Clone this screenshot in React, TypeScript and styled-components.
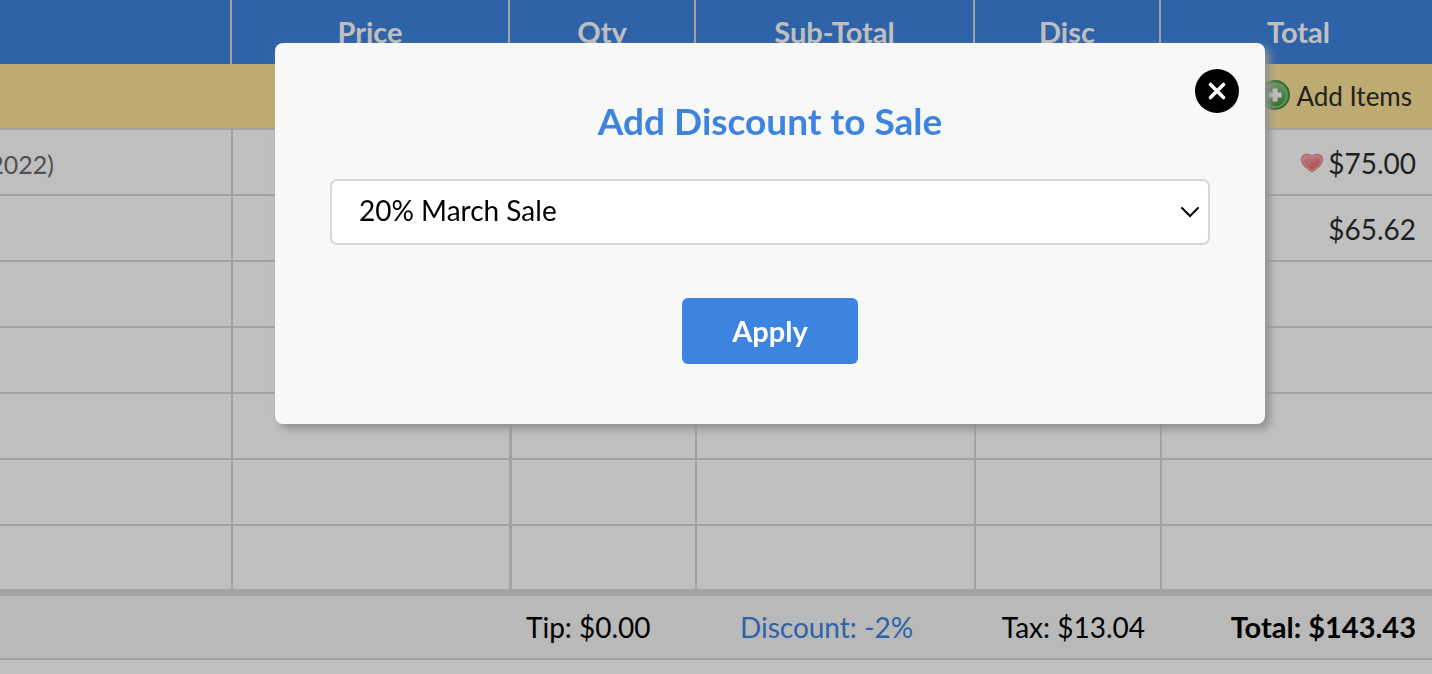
import React from "react";
import styled, { createGlobalStyle, css } from "styled-components";

const GlobalStyle = createGlobalStyle`
  *, *::before, *::after { box-sizing: border-box; }
  body { margin: 0; background: #fff; font-family: Lato, "Liberation Sans", sans-serif; overflow-x: hidden; }
  button, select { font-family: inherit; }
`;

const line = "#d9d9d9";

const SaleTable = styled.table`
  width: 100%;
  table-layout: fixed;
  border-collapse: separate;
  border-spacing: 0;
  color: #2d2d2d;
  font-size: 28px;
  line-height: 36px;
`;

const Column = styled.col<{ $width: number }>`
  width: ${(p) => p.$width}px;
`;

const HeadCell = styled.th`
  height: 64px;
  padding: 0;
  background: #3f84e1;
  color: #fff;
  font-size: 29px;
  font-weight: 700;
  border-right: 2px solid ${line};
  &:last-child { border-right: 0; padding-left: 4px; }
`;

const ActionCell = styled.td`
  height: 64px;
  padding: 0 20px 3px 0;
  background: #fee498;
  text-align: right;
`;

const AddItems = styled.button`
  display: inline-flex;
  align-items: center;
  gap: 4px;
  padding: 0;
  border: 0;
  background: none;
  color: inherit;
  font-size: 26px;
  line-height: 36px;
  white-space: nowrap;
  vertical-align: middle;
`;

const Cell = styled.td<{ $last?: boolean; $heavy?: boolean }>`
  height: ${(p) => (p.$last ? 65 : 66)}px;
  padding: 0;
  border-top: 2px solid ${line};
  border-left: ${(p) => (p.$heavy ? 2 : 1)}px solid ${line};
  border-right: 1px solid ${line};
  &:first-child { border-left: 0; }
  &:last-child { border-right: 0; padding: 0 16px 2px 0; text-align: right; }
`;

const Note = styled.div`
  display: flex;
  justify-content: flex-end;
  width: 54px;
  padding-top: 4px;
  overflow: hidden;
  color: #6c6c6c;
  font-size: 25px;
`;

const Amount = styled.span`
  display: inline-flex;
  align-items: center;
  gap: 5px;
  vertical-align: middle;
`;

const FootCell = styled.td<{ $align?: "left" | "center" | "right"; $strong?: boolean }>`
  height: 71px;
  padding: 0 16px;
  background: #f7f7f7;
  color: #000;
  border-top: 7px solid ${line};
  border-bottom: 2px solid ${line};
  text-align: ${(p) => p.$align ?? "left"};
  white-space: nowrap;
  ${(p) => p.$strong && css`font-size: 29px; font-weight: 700;`}
`;

const DiscountLink = styled.a`
  margin-right: 18px;
  color: #3f84e1;
  text-decoration: none;
`;

const Overlay = styled.div`
  position: fixed;
  inset: 0;
  padding: 43px 167px 0 275px;
  background: rgba(0, 0, 0, 0.25);
`;

const Dialog = styled.form`
  position: relative;
  display: flex;
  flex-direction: column;
  align-items: center;
  padding: 54px 55px 60px;
  border-radius: 8px;
  background: #f8f8f8;
  box-shadow: 5px 5px 8px #909090;
`;

const CloseButton = styled.button`
  position: absolute;
  top: 26px;
  right: 26px;
  width: 44px;
  height: 44px;
  padding: 0;
  border: 0;
  border-radius: 50%;
  background: #000;
  svg { display: block; }
`;

const Title = styled.h2`
  margin: 0 0 34px;
  color: #3d84e1;
  font-size: 37px;
  line-height: 48px;
  font-weight: 700;
`;

const SelectWrap = styled.div`
  position: relative;
  width: 100%;
  svg { position: absolute; right: 10px; top: 26px; pointer-events: none; }
`;

const Select = styled.select`
  display: block;
  appearance: none;
  width: 100%;
  height: 66px;
  padding: 0 44px 4px 27px;
  border: 2px solid #d6d6d6;
  border-radius: 7px;
  background: #fff;
  color: #000;
  font-size: 28px;
`;

const ApplyButton = styled.button`
  width: 176px;
  height: 66px;
  margin-top: 53px;
  padding: 0 0 2px;
  border: 0;
  border-radius: 6px;
  background: #3d84e1;
  color: #fff;
  font-size: 29px;
  font-weight: 700;
`;

const PlusIcon = () => (
  <svg width="32" height="32" viewBox="0 0 32 32" aria-hidden="true">
    <defs>
      <linearGradient id="plusFill" x1="0" y1="0" x2="0" y2="1">
        <stop offset="0" stopColor="#8cc486" />
        <stop offset="1" stopColor="#439539" />
      </linearGradient>
    </defs>
    <circle cx="15" cy="15" r="15" fill="#47923f" />
    <circle cx="15" cy="15" r="12" fill="url(#plusFill)" stroke="#8fc88a" strokeWidth="1.500" />
    <path d="M12.500 8.500h5v4h4v5h-4v4h-5v-4h-4v-5h4z" fill="#fff" />
  </svg>
);

const HeartIcon = () => (
  <svg width="22" height="20" viewBox="0 0 22 20" aria-hidden="true">
    <defs>
      <linearGradient id="heartFill" x1="0" y1="0" x2="0.4" y2="1">
        <stop offset="0" stopColor="#ffb0b0" />
        <stop offset="1" stopColor="#e86a6e" />
      </linearGradient>
    </defs>
    <path d="M11 19.5C7 16 0 13 0 6.500 0 3 2.600 0.800 5.800 0.800c2.200 0 4.200 0.800 5.200 2.200 1-1.400 3-2.200 5.200-2.200 3.200 0 5.800 2.200 5.800 5.700 0 6.500-7 9.500-11 13z" fill="#ec7f80" />
    <path d="M11 17.300C7.500 14.500 1.700 11.800 1.700 6.800 1.700 4 3.600 2.500 6 2.500c2.200 0 4 1 5 2.800 1-1.800 2.800-2.800 5-2.800 2.400 0 4.300 1.500 4.300 4.300 0 5-5.800 7.700-9.300 10.500z" fill="url(#heartFill)" stroke="#ffc4c4" strokeWidth="0.8" />
  </svg>
);

const columns = [232, 278, 186, 279, 186, 271];
const headings = ["", "Price", "Qty", "Sub-Total", "Disc", "Total"];
const rows: { note?: string; total?: string; liked?: boolean }[] = [
  { note: "2022)", total: "$75.00", liked: true },
  { total: "$65.62" },
  {},
  {},
  {},
  {},
  {},
];

export default function App() {
  return (
    <>
      <GlobalStyle />
      <SaleTable>
        <colgroup>
          {columns.map((w, i) => <Column key={i} $width={w} />)}
        </colgroup>
        <thead>
          <tr>{headings.map((h, i) => <HeadCell key={i} scope="col">{h}</HeadCell>)}</tr>
        </thead>
        <tbody>
          <tr>
            <ActionCell colSpan={6}>
              <AddItems type="button"><PlusIcon />Add Items</AddItems>
            </ActionCell>
          </tr>
          {rows.map((row, r) => {
            const last = r === rows.length - 1;
            return (
              <tr key={r}>
                <Cell $last={last}>{row.note && <Note>{row.note}</Note>}</Cell>
                <Cell $last={last} />
                <Cell $last={last} $heavy />
                <Cell $last={last} />
                <Cell $last={last} />
                <Cell $last={last}>
                  {row.total && <Amount>{row.liked && <HeartIcon />}{row.total}</Amount>}
                </Cell>
              </tr>
            );
          })}
        </tbody>
        <tfoot>
          <tr>
            <FootCell colSpan={2} />
            <FootCell>Tip: $0.00</FootCell>
            <FootCell $align="center"><DiscountLink href="#discount">Discount: -2%</DiscountLink></FootCell>
            <FootCell $align="right">Tax: $13.04</FootCell>
            <FootCell $align="right" $strong>Total: $143.43</FootCell>
          </tr>
        </tfoot>
      </SaleTable>
      <Overlay>
        <Dialog role="dialog" aria-modal="true" aria-labelledby="discount-title" onSubmit={(e) => e.preventDefault()}>
          <CloseButton type="button" aria-label="Close">
            <svg width="44" height="44" viewBox="0 0 44 44" aria-hidden="true">
              <path d="M15.500 15.500l13 13M28.500 15.500l-13 13" stroke="#fff" strokeWidth="3.600" strokeLinecap="round" />
            </svg>
          </CloseButton>
          <Title id="discount-title">Add Discount to Sale</Title>
          <SelectWrap>
            <Select aria-labelledby="discount-title" defaultValue="march">
              <option value="march">20% March Sale</option>
            </Select>
            <svg width="20" height="14" viewBox="0 0 20 14" aria-hidden="true">
              <path d="M2 3l8 8 8-8" fill="none" stroke="#000" strokeWidth="2" strokeLinecap="round" />
            </svg>
          </SelectWrap>
          <ApplyButton type="submit">Apply</ApplyButton>
        </Dialog>
      </Overlay>
    </>
  );
}
